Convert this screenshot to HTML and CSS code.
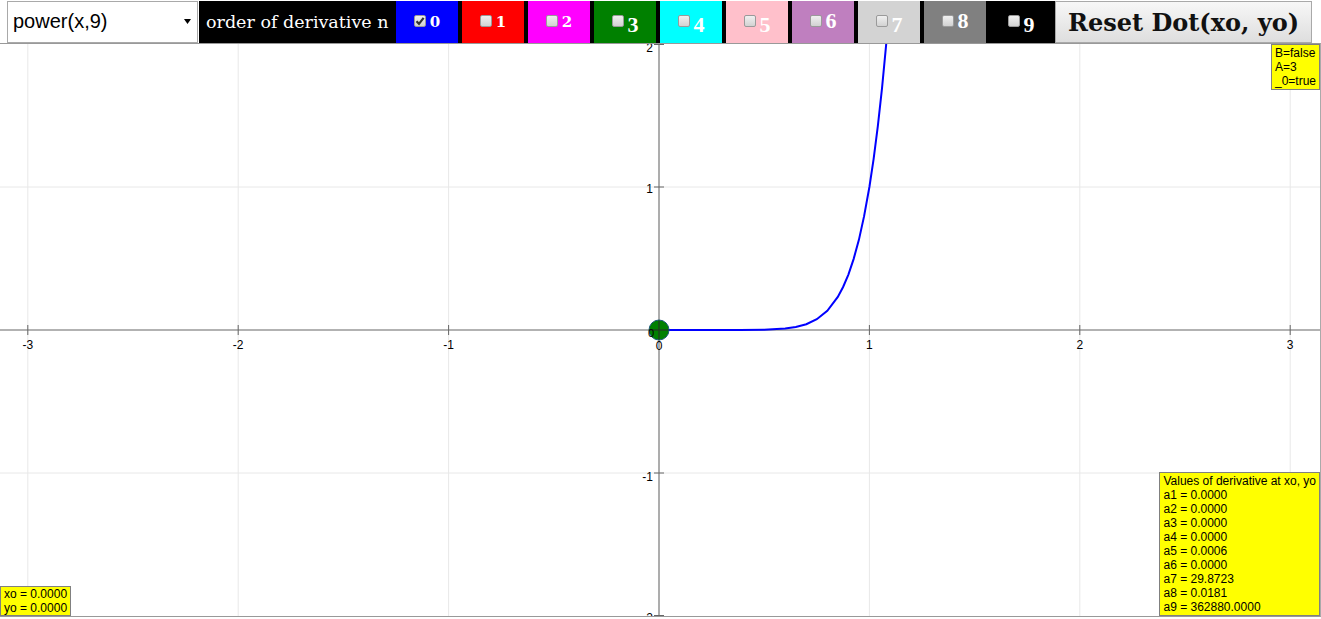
FILE: index.html
```html
<!DOCTYPE html>
<html>
<head>
<meta charset="utf-8">
<link rel="stylesheet" href="styles.css">
</head>
<body>
<div class="toolbar">
  <div class="select">
    <span class="select-text">power(x,9)</span>
    <svg class="select-arrow" width="7" height="5" viewBox="0 0 7 5"><polygon points="0,0 7,0 3.5,5" fill="#000"/></svg>
  </div>
  <div class="ctrl">
    <div class="ctrl-label">order of derivative n</div>
    <div class="boxes">
      <div class="box c0"><span class="cb checked"><svg width="10" height="10" viewBox="0 0 10 10"><path d="M1.5 5.2 L4 7.8 L8.6 1.8" fill="none" stroke="#333" stroke-width="2.2"/></svg></span><span class="d small">0</span></div>
      <div class="box c1"><span class="cb"></span><span class="d small">1</span></div>
      <div class="box c2"><span class="cb"></span><span class="d small">2</span></div>
      <div class="box c3"><span class="cb"></span><span class="d low">3</span></div>
      <div class="box c4"><span class="cb"></span><span class="d low">4</span></div>
      <div class="box c5"><span class="cb"></span><span class="d low">5</span></div>
      <div class="box c6"><span class="cb"></span><span class="d high">6</span></div>
      <div class="box c7"><span class="cb"></span><span class="d low">7</span></div>
      <div class="box c8"><span class="cb"></span><span class="d high">8</span></div>
      <div class="box c9"><span class="cb"></span><span class="d low">9</span></div>
    </div>
  </div>
  <div class="reset">Reset Dot(xo, yo)</div>
</div>
<div class="board">
  <svg class="plot" width="1320" height="572" viewBox="0 44 1320 572">
    <g stroke="#e8e8e8" stroke-width="1">
      <line x1="27.8" y1="44" x2="27.8" y2="616"/>
      <line x1="238.2" y1="44" x2="238.2" y2="616"/>
      <line x1="448.6" y1="44" x2="448.6" y2="616"/>
      <line x1="869.4" y1="44" x2="869.4" y2="616"/>
      <line x1="1079.8" y1="44" x2="1079.8" y2="616"/>
      <line x1="1290.2" y1="44" x2="1290.2" y2="616"/>
      <line x1="0" y1="187" x2="1320" y2="187"/>
      <line x1="0" y1="473" x2="1320" y2="473"/>
    </g>
    <g stroke="#999" stroke-width="1.6">
      <line x1="0" y1="330" x2="1320" y2="330"/>
      <line x1="659" y1="44" x2="659" y2="616"/>
    </g>
    <g stroke="#666" stroke-width="1">
      <line x1="27.8" y1="325" x2="27.8" y2="335"/>
      <line x1="238.2" y1="325" x2="238.2" y2="335"/>
      <line x1="448.6" y1="325" x2="448.6" y2="335"/>
      <line x1="869.4" y1="325" x2="869.4" y2="335"/>
      <line x1="1079.8" y1="325" x2="1079.8" y2="335"/>
      <line x1="1290.2" y1="325" x2="1290.2" y2="335"/>
      <line x1="654" y1="187" x2="664" y2="187"/>
      <line x1="654" y1="473" x2="664" y2="473"/>
      <line x1="654" y1="44.5" x2="664" y2="44.5"/>
      <line x1="654" y1="615.5" x2="664" y2="615.5"/>
    </g>
    <g class="lbl" font-family="Liberation Sans, Arial, sans-serif" font-size="12" fill="#000">
      <text x="27.8" y="349" text-anchor="middle">-3</text>
      <text x="238.2" y="349" text-anchor="middle">-2</text>
      <text x="448.6" y="349" text-anchor="middle">-1</text>
      <text x="659" y="350" text-anchor="middle">0</text>
      <text x="869.4" y="349" text-anchor="middle">1</text>
      <text x="1079.8" y="349" text-anchor="middle">2</text>
      <text x="1290.2" y="349" text-anchor="middle">3</text>
      <text x="653" y="52" text-anchor="end">2</text>
      <text x="653" y="193" text-anchor="end">1</text>
      <text x="653" y="481" text-anchor="end">-1</text>
      <text x="653" y="622" text-anchor="end">-2</text>
    </g>
    <path d="M659,330 L700,330 L740,329.95 L764.2,329.72 L785.2,328.56 L795.8,327.04 L806.3,324.23 L816.8,319.26 L827.3,310.81 L837.8,296.88 L843.1,287.0 L848.4,274.6 L853.6,259.1 L858.9,239.87 L864.1,216.14 L869.4,187 L873.6,159.1 L877.8,126.47 L882.0,88.4 L886.2,44.14 L888.3,19.4" fill="none" stroke="#0000ff" stroke-width="2"/>
    <circle cx="659" cy="330" r="10" fill="#008000" stroke="#1e5a7a" stroke-width="1"/>
    <g stroke="#1f3f1f" stroke-width="1.4">
      <line x1="649.5" y1="330" x2="668.5" y2="330"/>
      <line x1="659" y1="320.5" x2="659" y2="339.5"/>
    </g>
    <text x="651" y="337" text-anchor="middle" font-family="Liberation Sans, Arial, sans-serif" font-size="11" fill="#000">0</text>
  </svg>
  <div class="info info-tr">B=false<br>A=3<br>_0=true</div>
  <div class="info info-br">Values of derivative at xo, yo<br>a1 = 0.0000<br>a2 = 0.0000<br>a3 = 0.0000<br>a4 = 0.0000<br>a5 = 0.0006<br>a6 = 0.0000<br>a7 = 29.8723<br>a8 = 0.0181<br>a9 = 362880.0000</div>
  <div class="info info-bl">xo = 0.0000<br>yo = 0.0000</div>
</div>
</body>
</html>
```
FILE: styles.css
```css
html, body {
  margin: 0;
  padding: 0;
  background: #fff;
  font-family: "Liberation Sans", Arial, sans-serif;
  overflow: hidden;
}
.toolbar {
  display: flex;
  height: 43px;
  padding-top: 1px;
  box-sizing: border-box;
}
.select {
  margin-left: 7px;
  width: 191px;
  height: 42px;
  box-sizing: border-box;
  border: 1px solid #a9a9a9;
  background: #fff;
  display: flex;
  align-items: center;
  justify-content: space-between;
  padding: 0 6px 0 5px;
}
.select-text {
  font-size: 20px;
  color: #000;
  margin-top: -2px;
}
.select-arrow {
  margin-top: -2px;
}
.ctrl {
  display: flex;
  background: #000;
  height: 42px;
  margin-left: 1px;
  padding-right: 3px;
}
.ctrl-label {
  width: 197px;
  box-sizing: border-box;
  padding-left: 7px;
  display: flex;
  align-items: center;
  color: #fff;
  font-family: "DejaVu Serif", Georgia, serif;
  font-size: 17.5px;
  white-space: nowrap;
}
.boxes {
  display: flex;
  gap: 4px;
}
.box {
  width: 62px;
  height: 42px;
  display: flex;
  justify-content: center;
  align-items: flex-start;
  color: #fff;
}
.c0 { background: #0000ff; }
.c1 { background: #ff0000; }
.c2 { background: #ff00ff; }
.c3 { background: #008000; }
.c4 { background: #00ffff; }
.c5 { background: #ffc0cb; }
.c6 { background: #bf7fbf; }
.c7 { background: #d3d3d3; }
.c8 { background: #808080; }
.c9 { background: #000000; }
.cb {
  width: 12px;
  height: 12px;
  box-sizing: border-box;
  margin-top: 14px;
  margin-right: 4px;
  border: 1px solid #9a9a9a;
  border-radius: 2px;
  background: linear-gradient(#f0f0f0, #d2d2d2);
  display: flex;
  align-items: center;
  justify-content: center;
}
.cb svg { display: block; }
.d {
  display: block;
  line-height: 1;
  font-weight: bold;
}
.d.small {
  font-family: "DejaVu Serif", Georgia, serif;
  font-size: 15px;
  padding-top: 14px;
}
.d.high {
  font-family: "Liberation Serif", "Times New Roman", serif;
  font-size: 22px;
  padding-top: 9px;
}
.d.low {
  font-family: "Liberation Serif", "Times New Roman", serif;
  font-size: 22px;
  padding-top: 13px;
}
.reset {
  width: 257px;
  height: 42px;
  box-sizing: border-box;
  border: 1px solid #a9a9a9;
  background: linear-gradient(#f7f7f7, #dedede);
  display: flex;
  align-items: center;
  justify-content: center;
  font-family: "DejaVu Serif", Georgia, serif;
  font-weight: bold;
  font-size: 24px;
  color: #111;
  white-space: nowrap;
}
.board {
  position: relative;
  width: 1320px;
  height: 572px;
  border-top: 1px solid #999;
  border-bottom: 1px solid #999;
  border-right: 1px solid #aaa;
  overflow: hidden;
}
.plot {
  display: block;
}
.info {
  position: absolute;
  background: #ffff00;
  border: 1px solid #808080;
  font-size: 12px;
  line-height: 14px;
  color: #000;
  padding: 1px 3px;
  white-space: nowrap;
}
.info-tr { top: 0; right: 0; }
.info-br { bottom: 0; right: 0; }
.info-bl { bottom: 0; left: 0; padding: 0 3px; }
```
